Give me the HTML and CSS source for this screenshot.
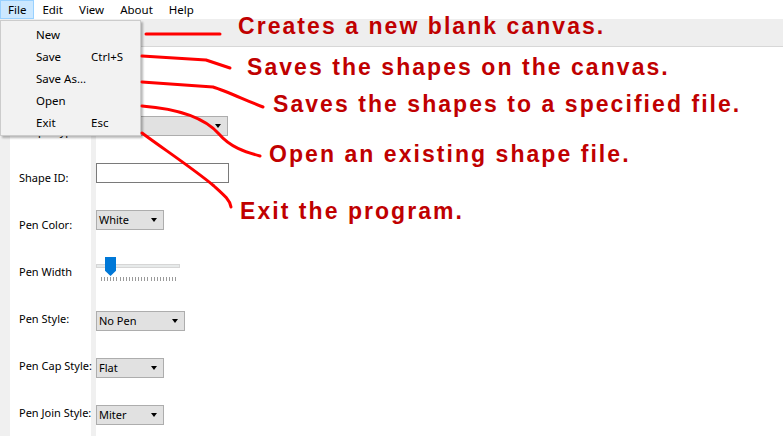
FILE: index.html
```html
<!DOCTYPE html>
<html>
<head>
<meta charset="utf-8">
<link rel="stylesheet" href="styles.css">
</head>
<body>
<div class="app">
  <div class="menubar">
    <span class="mi active">File</span><span class="mi">Edit</span><span class="mi">View</span><span class="mi">About</span><span class="mi">Help</span>
  </div>
  <div class="toolbar"></div>
  <div class="main">
    <div class="form">
      <div class="lbl">Shape Type:</div>
      <div class="field up"><div class="combo w132"><span>&nbsp;</span><i class="arrow"></i></div></div>

      <div class="lbl">Shape ID:</div>
      <div class="field up"><div class="textbox"></div></div>

      <div class="lbl">Pen Color:</div>
      <div class="field up"><div class="combo w68"><span>White</span><i class="arrow"></i></div></div>

      <div class="lbl">Pen Width</div>
      <div class="field slide">
        <div class="slider">
          <div class="track"></div>
          <div class="thumb"></div>
          <div class="ticks"></div>
        </div>
      </div>

      <div class="lbl">Pen Style:</div>
      <div class="field down"><div class="combo w89"><span>No Pen</span><i class="arrow"></i></div></div>

      <div class="lbl">Pen Cap Style:</div>
      <div class="field down"><div class="combo w68"><span>Flat</span><i class="arrow"></i></div></div>

      <div class="lbl">Pen Join Style:</div>
      <div class="field down"><div class="combo w68"><span>Miter</span><i class="arrow"></i></div></div>
    </div>
  </div>

  <div class="menu">
    <div class="item"><span class="name">New</span><span class="key"></span></div>
    <div class="item"><span class="name">Save</span><span class="key">Ctrl+S</span></div>
    <div class="item"><span class="name">Save As...</span><span class="key"></span></div>
    <div class="item"><span class="name">Open</span><span class="key"></span></div>
    <div class="item"><span class="name">Exit</span><span class="key">Esc</span></div>
  </div>

  <svg class="lines" width="783" height="436" viewBox="0 0 783 436">
    <path d="M146 34 L220 34"/>
    <path d="M142 56 L206 60 L230 68"/>
    <path d="M142 82 L213 87 C226 91 245 100 263 107"/>
    <path d="M142 106 C180 109 205 118 219 134 C230 147 245 152 260 156"/>
    <path d="M142 133 C165 150 195 170 214 186 C224 195 230 200 231 207"/>
  </svg>

  <div class="note n1">Creates a new blank canvas.</div>
  <div class="note n2">Saves the shapes on the canvas.</div>
  <div class="note n3">Saves the shapes to a specified file.</div>
  <div class="note n4">Open an existing shape file.</div>
  <div class="note n5">Exit the program.</div>
</div>
</body>
</html>
```
FILE: styles.css
```css
* { box-sizing: border-box; }
html, body { margin: 0; padding: 0; }
body {
  width: 783px;
  height: 436px;
  overflow: hidden;
  background: #fff;
  font-family: "Noto Sans", "Liberation Sans", sans-serif;
  font-size: 11px;
  color: #000;
}
.app {
  position: relative;
  width: 783px;
  height: 436px;
  display: flex;
  flex-direction: column;
}
.menubar {
  height: 20px;
  background: #fff;
  display: flex;
  align-items: flex-start;
  font-size: 11.5px;
}
.mi {
  height: 19px;
  line-height: 17px;
  padding: 0 7px;
  border: 1px solid transparent;
}
.mi.active {
  background: #cce8ff;
  border-color: #99d1ff;
}
.toolbar {
  height: 31px;
  background: #eeeeee;
  border-bottom: 1px solid #d7d7d7;
}
.main {
  flex: 1;
  background: linear-gradient(to right, #f0f0f0 0 10px, #fff 10px 91px, #f0f0f0 91px 96px, #fff 96px);
  padding-top: 60px;
}
.form {
  display: grid;
  grid-template-columns: 81px 1fr;
  column-gap: 5px;
  grid-auto-rows: 47px;
  align-items: center;
  padding-left: 10px;
}
.lbl {
  padding-left: 9px;
  line-height: 16px;
  white-space: nowrap;
}
.field { display: flex; }
.field.up { margin-bottom: 9px; }
.field.down { margin-top: 5px; }
.field.slide { margin-bottom: 5px; }

.combo {
  height: 20px;
  background: #e1e1e1;
  border: 1px solid #adadad;
  display: flex;
  align-items: center;
  justify-content: space-between;
  padding: 0 6px 0 2px;
  line-height: 16px;
}
.w132 { width: 132px; }
.w68 { width: 68px; }
.w89 { width: 89px; }
.arrow {
  width: 0;
  height: 0;
  border-left: 3.5px solid transparent;
  border-right: 3.5px solid transparent;
  border-top: 4px solid #000;
}
.textbox {
  width: 133px;
  height: 20px;
  border: 1px solid #7a7a7a;
  background: #fff;
}

.slider {
  position: relative;
  width: 84px;
  height: 26px;
}
.track {
  margin-top: 8px;
  height: 4px;
  background: #e7eaea;
  border: 1px solid #d6d6d6;
}
.ticks {
  margin: 9px 0 0 5px;
  width: 75px;
  height: 4px;
  background: repeating-linear-gradient(to right, #9a9a9a 0 1px, transparent 1px 3.1px);
}
.thumb {
  position: absolute;
  left: 9px;
  top: 1px;
  width: 11px;
  height: 19px;
  background: #0078d7;
  clip-path: polygon(0 0, 100% 0, 100% 72%, 50% 100%, 0 72%);
}

.menu {
  position: absolute;
  left: 0;
  top: 20px;
  width: 141px;
  background: #f2f2f2;
  border: 1px solid #cccccc;
  padding: 2px 0;
  box-shadow: 2px 2px 2px rgba(0,0,0,0.28);
  font-size: 11.5px;
}
.item {
  height: 22px;
  display: flex;
  align-items: center;
  padding-left: 35px;
  line-height: 16px;
  padding-top: 1px;
}
.item .name { width: 55px; white-space: nowrap; }

.lines {
  position: absolute;
  left: 0;
  top: 0;
}
.lines path {
  fill: none;
  stroke: #ff0000;
  stroke-width: 3;
  stroke-linecap: round;
  stroke-linejoin: round;
}
.note {
  position: absolute;
  font-family: "Liberation Sans", Arial, sans-serif;
  font-weight: bold;
  font-size: 23px;
  line-height: 23px;
  letter-spacing: 2.05px;
  color: #c00000;
  white-space: nowrap;
}
.n1 { left: 238px; top: 15px; }
.n2 { left: 247px; top: 56px; }
.n3 { left: 273px; top: 93px; }
.n4 { left: 269px; top: 143px; }
.n5 { left: 240px; top: 200px; }
```
